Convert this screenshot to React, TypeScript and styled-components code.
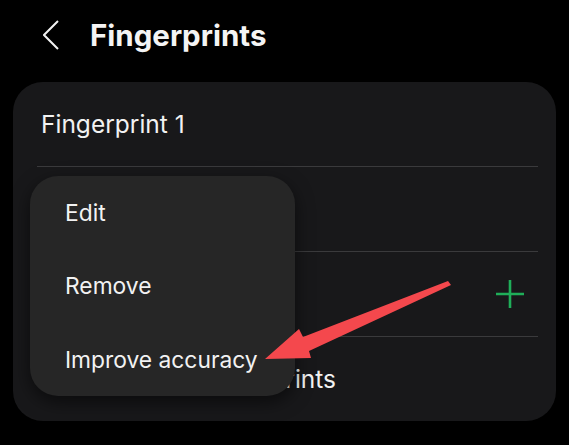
import React from "react";
import styled, { createGlobalStyle } from "styled-components";

// fingerprint settings list with the long-press menu open
function App() {
  return (
    <Page>
      <GlobalStyle />
      <Header>
        <BackButton aria-label="Back">
          <svg width="16" height="30" viewBox="0 0 16 30">
            <polyline points="15,1 1,15 15,29" fill="none" stroke="#f2f2f2" strokeWidth="2" />
          </svg>
        </BackButton>
        <Title>Fingerprints</Title>
      </Header>
      <Card>
        <Row>
          <RowLabel>Fingerprint 1</RowLabel>
        </Row>
        <Row>
          <RowLabel>Fingerprint 2</RowLabel>
        </Row>
        <Row>
          <RowLabel>Add fingerprint</RowLabel>
          <svg width="28" height="28" viewBox="0 0 28 28">
            <path d="M14 0v28M0 14h28" stroke="#1fae59" strokeWidth="2.6" />
          </svg>
        </Row>
        <Row $last>
          <RowLabel>Check added fingerprints</RowLabel>
        </Row>
        <Menu>
          <MenuItem>Edit</MenuItem>
          <MenuItem>Remove</MenuItem>
          <MenuItem>Improve accuracy</MenuItem>
        </Menu>
      </Card>
      <Pointer width="569" height="445" viewBox="0 0 569 445">
        <polygon
          points="265,359 299,329 303,337 448,281 451,285 309,351 311,358"
          fill="#f4484d"
        />
      </Pointer>
    </Page>
  );
}

export default App;

const GlobalStyle = createGlobalStyle`
  html, body {
    margin: 0;
    background: #000;
  }
  body {
    font-family: Inter, Roboto, "Noto Sans", sans-serif;
    color: #f2f2f2;
  }
`;

const Page = styled.div`
  position: relative;
  width: 569px;
  height: 445px;
  overflow: hidden;
  background: #000;
`;

const Header = styled.div`
  height: 70px;
  display: flex;
  align-items: center;
  padding-left: 43px;
`;

const BackButton = styled.div`
  display: flex;
  align-items: center;
  width: 47px;
  height: 30px;
`;

const Title = styled.div`
  font-size: 29.5px;
  font-weight: 700;
  color: #f4f4f4;
`;

const Card = styled.div`
  position: relative;
  margin: 12px 13px 0;
  background: #18181a;
  border-radius: 30px;
  padding: 0 18px 0 24px;
`;

const Row = styled.div<{ $last?: boolean }>`
  height: 84px;
  display: flex;
  align-items: center;
  justify-content: space-between;
  padding: 0 14px 0 4px;
  border-bottom: ${(p) => (p.$last ? "none" : "1px solid #3a3a3c")};
`;

const RowLabel = styled.span`
  font-size: 24.5px;
  color: #f2f2f2;
`;

const Menu = styled.div`
  position: absolute;
  left: 17px;
  top: 94px;
  width: 265px;
  height: 220px;
  background: #262626;
  border-radius: 28px;
  box-shadow: 0 6px 18px rgba(0, 0, 0, 0.55);
  display: flex;
  flex-direction: column;
`;

const MenuItem = styled.div`
  flex: 1;
  display: flex;
  align-items: center;
  padding-left: 35px;
  font-size: 22.8px;
  color: #f2f2f2;
`;

const Pointer = styled.svg`
  position: absolute;
  left: 0;
  top: 0;
  pointer-events: none;
`;
